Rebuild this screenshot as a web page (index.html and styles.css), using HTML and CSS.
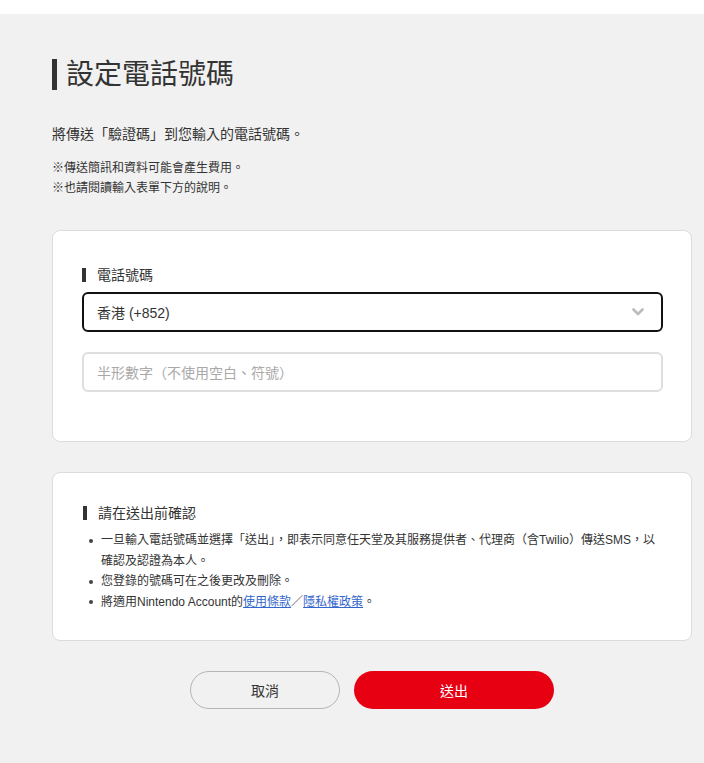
FILE: index.html
```html
<!DOCTYPE html>
<html lang="zh-Hant">
<head>
<meta charset="utf-8">
<title>設定電話號碼</title>
<link rel="stylesheet" href="styles.css">
</head>
<body>
<div class="topbar"></div>
<main class="page">
  <h1 class="title">設定電話號碼</h1>
  <p class="lead">將傳送「驗證碼」到您輸入的電話號碼。</p>
  <p class="notes">※傳送簡訊和資料可能會產生費用。<br>※也請閱讀輸入表單下方的說明。</p>

  <section class="card card-form">
    <div class="label">電話號碼</div>
    <div class="select">
      <span>香港 (+852)</span>
      <svg class="chev" width="12" height="8" viewBox="0 0 12 8"><path d="M1.5 1.5 L6 6 L10.5 1.5" fill="none" stroke="#bcbcbc" stroke-width="2.6" stroke-linecap="round" stroke-linejoin="round"/></svg>
    </div>
    <div class="input"><span class="ph">半形數字（不使用空白、符號）</span></div>
  </section>

  <section class="card card-info">
    <div class="label">請在送出前確認</div>
    <ul class="list">
      <li>一旦輸入電話號碼並選擇「送出」，即表示同意任天堂及其服務提供者、代理商（含Twilio）傳送SMS，以確認及認證為本人。</li>
      <li>您登錄的號碼可在之後更改及刪除。</li>
      <li>將適用Nintendo Account的<a href="#">使用條款</a><span class="sep">／</span><a href="#">隱私權政策</a>。</li>
    </ul>
  </section>

  <div class="actions">
    <button class="btn btn-cancel">取消</button>
    <button class="btn btn-submit">送出</button>
  </div>
</main>
</body>
</html>
```

FILE: styles.css
```css
html, body {
  margin: 0;
  padding: 0;
}
body {
  background: #f1f1f1;
  color: #333;
  font-family: "Liberation Sans", "Noto Sans CJK TC", sans-serif;
  min-height: 763px;
}
.topbar {
  height: 14px;
  background: #fff;
}
.page {
  width: 640px;
  margin-left: 52px;
  padding-top: 45px;
  padding-bottom: 40px;
}
.title {
  margin: 0;
  font-size: 28px;
  font-weight: normal;
  line-height: 31px;
  height: 31px;
  border-left: 5px solid #333;
  padding-left: 9px;
  color: #333;
}
.lead {
  margin: 34px 0 0;
  font-size: 14px;
  line-height: 20px;
}
.notes {
  margin: 14px 0 0;
  font-size: 12px;
  line-height: 20px;
}
.card {
  background: #fff;
  border: 1px solid #dcdcdc;
  border-radius: 8px;
  box-sizing: border-box;
  width: 640px;
}
.card-form {
  margin-top: 32px;
  padding: 34px 28px 49px 29px;
}
.label {
  font-size: 14px;
  line-height: 20px;
  border-left: 4px solid #333;
  padding-left: 11px;
  height: 14px;
  display: flex;
  align-items: center;
  margin-top: 3px;
  margin-bottom: 10px;
}
.select, .input {
  box-sizing: border-box;
  height: 40px;
  border-radius: 6px;
  display: flex;
  align-items: center;
  padding: 0 17px 0 13px;
  font-size: 14px;
}
.select {
  border: 2px solid #111;
  justify-content: space-between;
  color: #333;
}
.chev {
  display: block;
}
.input {
  margin-top: 20px;
  border: 2px solid #dedede;
}
.ph {
  color: #a9a9a9;
}
.card-info {
  margin-top: 30px;
  padding: 30px 30px 28px 30px;
}
.card-info .label {
  margin-bottom: 10px;
}
.list {
  list-style: none;
  margin: 0;
  padding: 0 0 0 18px;
  font-size: 12px;
  line-height: 20.5px;
}
.list li::before {
  content: "";
  display: inline-block;
  width: 4px;
  height: 4px;
  border-radius: 50%;
  background: #444;
  margin-left: -12px;
  margin-right: 8px;
  vertical-align: middle;
}
.list a {
  color: #3366cc;
  text-decoration: underline;
}
.sep {
  color: #666;
}
.actions {
  display: flex;
  justify-content: center;
  gap: 14px;
  margin-top: 30px;
}
.btn {
  height: 38px;
  border-radius: 19px;
  font-family: inherit;
  font-size: 14px;
  cursor: pointer;
  box-sizing: border-box;
}
.btn-cancel {
  width: 150px;
  background: transparent;
  border: 1px solid #b5b5b5;
  color: #333;
}
.btn-submit {
  width: 200px;
  background: #e60012;
  border: none;
  color: #fff;
}
```
